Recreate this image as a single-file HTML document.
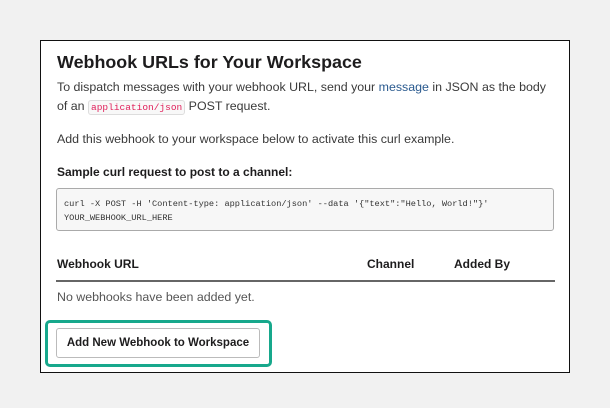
<!DOCTYPE html>
<html><head><style>
*{margin:0;padding:0;box-sizing:border-box}
body{width:610px;height:408px;background:#f1f1f1;font-family:"Liberation Sans",sans-serif;position:relative;overflow:hidden;color:#1d1c1d}
.panel{position:absolute;left:40px;top:40px;width:530px;height:333px;background:#fff;border:1px solid #111}
.a{position:absolute;white-space:nowrap}
.t{font-size:12.4px;color:#3a3a3a}
a{color:#2a5a8f;text-decoration:none}
code{font-family:"Liberation Mono",monospace;font-size:9.5px;color:#e01e5a;background:#f8f8f8;border:1px solid #ddd;border-radius:3px;padding:1px 2px}
.pre{left:15px;top:147px;width:498px;height:43px;background:#f7f7f7;border:1px solid #aaa;border-radius:3px;font-family:"Liberation Mono",monospace;font-size:8.65px;color:#333;padding:8px 7px;line-height:14px;white-space:pre}
.h{font-size:12px;font-weight:bold;color:#1d1c1d}
.line{left:15px;top:239px;width:499px;height:2px;background:#666}
.green{left:4px;top:279px;width:227px;height:47px;border:3px solid #17a88c;border-radius:5px}
.btn{left:15px;top:287px;width:204px;height:30px;border:1px solid #bbb;border-radius:3px;font-size:11.5px;font-weight:bold;text-align:center;line-height:28px;color:#1d1c1d}
</style></head><body>
<div class="panel">
<div class="a" style="font-size:17.9px;font-weight:bold;left:16px;top:11px">Webhook URLs for Your Workspace</div>
<div class="a t" style="left:16px;top:39px">To dispatch messages with your webhook URL, send your <a>message</a> in JSON as the body</div>
<div class="a t" style="left:16px;top:58px">of an <code>application/json</code> POST request.</div>
<div class="a t" style="left:16px;top:91px">Add this webhook to your workspace below to activate this curl example.</div>
<div class="a h" style="left:16px;top:124px">Sample curl request to post to a channel:</div>
<div class="a pre">curl -X POST -H 'Content-type: application/json' --data '{"text":"Hello, World!"}'
YOUR_WEBHOOK_URL_HERE</div>
<div class="a h" style="left:16px;top:216px">Webhook URL</div>
<div class="a h" style="left:326px;top:216px">Channel</div>
<div class="a h" style="left:413px;top:216px">Added By</div>
<div class="a line"></div>
<div class="a t" style="left:16px;top:249px;color:#555">No webhooks have been added yet.</div>
<div class="a green"></div>
<div class="a btn">Add New Webhook to Workspace</div>
</div>
</body></html>
